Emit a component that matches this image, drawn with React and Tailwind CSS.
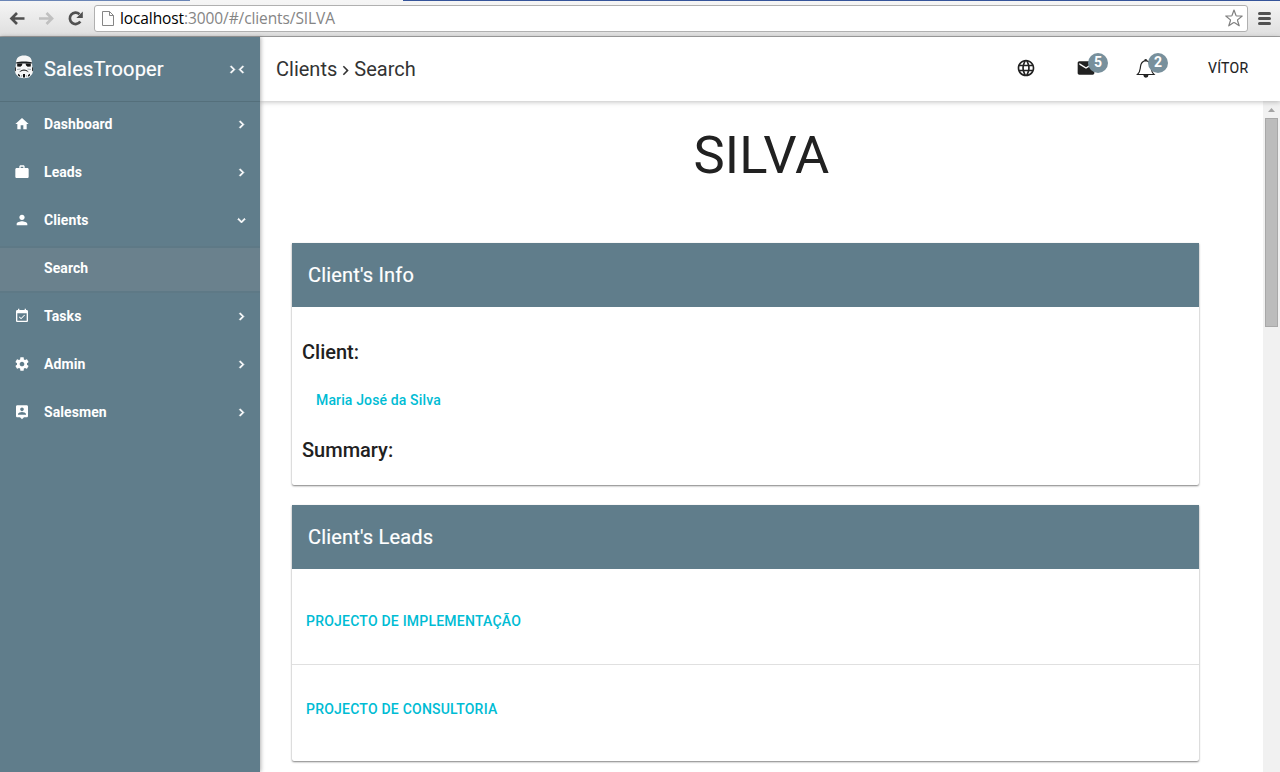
import React from 'react';

const paths = {
  home: 'M10 20v-6h4v6h5v-8h3L12 3 2 12h3v8z',
  work: 'M20 6h-4V4c0-1.1-.9-2-2-2h-4c-1.1 0-2 .9-2 2v2H4c-1.1 0-1.99.9-1.99 2L2 19c0 1.1.9 2 2 2h16c1.1 0 2-.9 2-2V8c0-1.1-.9-2-2-2zm-6 0h-4V4h4v2z',
  person: 'M12 12c2.21 0 4-1.79 4-4s-1.79-4-4-4-4 1.790-4 4 1.790 4 4 4zm0 2c-2.670 0-8 1.340-8 4v2h16v-2c0-2.660-5.330-4-8-4z',
  event: 'M16.530 11.060L15.470 10l-4.880 4.880-2.120-2.120-1.060 1.060L10.590 17l5.940-5.940zM19 3h-1V1h-2v2H8V1H6v2H5c-1.110 0-1.990.9-1.990 2L3 19c0 1.100.89 2 2 2h14c1.100 0 2-.9 2-2V5c0-1.100-.9-2-2-2zm0 16H5V8h14v11z',
  settings: 'M19.430 12.980c.04-.32.070-.64.070-.98s-.03-.66-.07-.98l2.110-1.650c.19-.15.240-.42.120-.64l-2-3.460c-.12-.22-.39-.3-.61-.22l-2.490 1c-.52-.4-1.080-.73-1.690-.98l-.38-2.650C14.460 2.180 14.250 2 14 2h-4c-.25 0-.46.180-.49.420l-.38 2.650c-.61.250-1.170.590-1.690.980l-2.490-1c-.23-.09-.49 0-.61.220l-2 3.460c-.13.220-.07.490.120.640l2.110 1.650c-.04.320-.07.650-.07.980s.03.660.070.980l-2.110 1.650c-.19.150-.24.420-.12.640l2 3.460c.12.220.390.300.610.220l2.490-1c.52.400 1.080.730 1.690.980l.38 2.650c.03.240.240.420.490.420h4c.25 0 .46-.18.490-.42l.38-2.650c.61-.25 1.170-.59 1.690-.98l2.490 1c.23.090.490 0 .610-.22l2-3.460c.12-.22.070-.49-.12-.64l-2.110-1.650zM12 15.500c-1.930 0-3.500-1.570-3.500-3.500s1.570-3.500 3.500-3.500 3.500 1.570 3.500 3.500-1.570 3.500-3.500 3.500z',
  contact: 'M19 2H5c-1.110 0-2 .9-2 2v14c0 1.100.89 2 2 2h4l3 3 3-3h4c1.100 0 2-.9 2-2V4c0-1.100-.9-2-2-2zm-7 3.300c1.490 0 2.700 1.210 2.700 2.700s-1.210 2.700-2.700 2.700S9.300 9.490 9.300 8s1.210-2.700 2.700-2.700zM18 16H6v-.9c0-2 4-3.100 6-3.100s6 1.100 6 3.100v.9z',
  right: 'M10 6L8.590 7.410 13.170 12l-4.580 4.590L10 18l6-6z',
  left: 'M15.410 7.410L14 6l-6 6 6 6 1.410-1.410L10.830 12z',
  down: 'M16.590 8.590L12 13.170 7.410 8.590 6 10l6 6 6-6z',
  globe: 'M11.990 2C6.470 2 2 6.480 2 12s4.470 10 9.990 10C17.520 22 22 17.520 22 12S17.520 2 11.990 2zm6.930 6h-2.950c-.32-1.250-.78-2.450-1.380-3.560 1.840.630 3.370 1.910 4.330 3.560zM12 4.040c.83 1.200 1.480 2.530 1.910 3.960h-3.820c.43-1.430 1.080-2.760 1.910-3.960zM4.260 14C4.100 13.360 4 12.690 4 12s.1-1.360.260-2h3.380c-.08.660-.14 1.320-.14 2 0 .68.060 1.340.140 2H4.260zm.82 2h2.950c.32 1.250.780 2.450 1.380 3.560-1.840-.63-3.370-1.900-4.330-3.560zm2.950-8H5.080c.96-1.660 2.490-2.930 4.330-3.560C8.810 5.550 8.350 6.750 8.030 8zM12 19.960c-.83-1.200-1.480-2.530-1.910-3.960h3.820c-.43 1.430-1.080 2.760-1.910 3.960zM14.340 14H9.660c-.09-.66-.16-1.320-.16-2 0-.68.070-1.350.160-2h4.680c.09.650.160 1.320.160 2 0 .68-.07 1.340-.16 2zm.25 5.560c.6-1.110 1.060-2.310 1.380-3.560h2.950c-.96 1.650-2.490 2.930-4.330 3.560zM16.360 14c.08-.66.140-1.320.140-2 0-.68-.06-1.340-.14-2h3.380c.16.640.260 1.310.260 2s-.1 1.360-.26 2h-3.380z',
  mail: 'M20 4H4c-1.100 0-1.990.9-1.990 2L2 18c0 1.100.9 2 2 2h16c1.100 0 2-.9 2-2V6c0-1.100-.9-2-2-2zm0 4l-8 5-8-5V6l8 5 8-5v2z',
};

function Icon({ name, className }) {
  return (
    <svg viewBox="0 0 24 24" fill="currentColor" className={className}>
      <path d={paths[name]} />
    </svg>
  );
}

function BrowserBar() {
  return (
    <header className="flex h-[37px] shrink-0 items-center border-b border-[#a2a2a2] bg-linear-to-b from-[#f6f6f6] to-[#dfdfdf]">
      <div className="flex h-full w-full flex-col">
        <div className="flex h-px">
          <div className="w-[190px] bg-[#6a85b6]" />
          <div className="w-[213px] bg-[#f5f5f5]" />
          <div className="flex-1 bg-[#35549a]" />
        </div>
        <div className="flex flex-1 items-center pb-px">
          <svg viewBox="0 0 94 30" className="h-[30px] w-[94px] shrink-0" fill="none" strokeWidth="2.700">
            <path d="M24.500 15.500H11.500M17 10l-5.500 5.500 5.500 5.500" stroke="#505050" />
            <path d="M39 15.500H52M46.500 10l5.500 5.500-5.500 5.500" stroke="#c0c0c0" />
            <path d="M80.300 18.500A5.700 5.700 0 1 1 79.500 11.200" stroke="#505050" />
            <path d="M82.800 8.500v6.500h-6.500z" fill="#505050" />
          </svg>
          <div className="flex h-[27px] flex-1 items-center rounded-[3px] border border-[#b0b0b0] bg-white pl-[7px] pr-[3px]">
            <svg viewBox="0 0 12 15" className="h-[15px] w-3" fill="#fdfdfd" stroke="#858585">
              <path d="M.5.5h7l4 4v10H.5zM7.500.5v4h4" />
            </svg>
            <span className="ml-[6px] flex-1 whitespace-pre font-['Open_Sans',sans-serif] text-[15.500px] leading-5 tracking-[-0.100px] text-[#858585]">
              <span className="text-black">localhost</span>:3000/#/clients/SILVA
            </span>
            <svg viewBox="0 0 20 20" className="size-5" fill="white" stroke="#808080" strokeWidth="1.200" strokeLinejoin="round">
              <path d="M10 2l1.900 5.300c.2.500.5.700 1 .7h5.300l-4.300 3.600c-.4.300-.5.700-.3 1.200l1.600 5-4.500-3c-.5-.3-.9-.3-1.400 0l-4.500 3 1.600-5c.2-.5.1-.9-.3-1.200L1.800 8h5.300c.5 0 .8-.2 1-.7z" />
            </svg>
          </div>
          <div className="flex w-[32px] flex-col items-center gap-[2px]">
            <div className="h-[3px] w-[13px] rounded-sm bg-[#505050]" />
            <div className="h-[3px] w-[13px] rounded-sm bg-[#505050]" />
            <div className="h-[3px] w-[13px] rounded-sm bg-[#505050]" />
          </div>
        </div>
      </div>
    </header>
  );
}

function Helmet() {
  return (
    <svg viewBox="0 0 20 24" className="h-6 w-5">
      <path d="M2 8C2 3 5 .6 10 .6S18 3 18 8l.5 5 .7 3-1 3-3.200 3.500-5 .7-5-.7L1.800 19l-1-3 .7-3z" fill="#f6f6f6" />
      <path d="M2.200 7.200c4-1 11.600-1 15.600 0v1.300H2.200z" fill="#1d2022" />
      <path d="M3.200 8.500h5.300l-.6 2-1.500 1.200-3.200-.2zM16.800 8.500h-5.300l.6 2 1.500 1.200 3.200-.2z" fill="#151515" />
      <path d="M1 12l1 .8v3.700l-1-.8zM19 12l-1 .8v3.700l1-.8z" fill="#333" />
      <path d="M5.200 17.500c1.500-4 8.100-4 9.600 0-2.500-2.200-7.100-2.200-9.600 0z" fill="#222" />
      <path d="M9 19h2v3.500H9zM4 18.800l2 1.200v1.700l-2-1.200zM16 18.800L14 20v1.700l2-1.200z" fill="#111" />
      <path d="M3 14.500l3.500-.5M17 14.500l-3.500-.5M7 22l1-2M13 22l-1-2" stroke="#8d989e" strokeWidth=".8" />
    </svg>
  );
}

const items = [
  ['home', 'Dashboard'],
  ['work', 'Leads'],
  ['person', 'Clients'],
  ['event', 'Tasks'],
  ['settings', 'Admin'],
  ['contact', 'Salesmen'],
];

function Sidebar() {
  return (
    <aside className="z-20 flex w-[260px] shrink-0 flex-col bg-[#607d8b] text-white shadow-[1px_0_4px_rgba(0,0,0,0.3)]">
      <div className="flex h-[65px] items-center border-b border-[#546f7b] pl-[14px] pr-[11px]">
        <div className="-mt-1"><Helmet /></div>
        <span className="ml-[10px] flex-1 text-xl tracking-[0.170px] [-webkit-text-stroke:0.200px]">SalesTrooper</span>
        <Icon name="right" className="size-[15px] stroke-white" />
        <Icon name="left" className="-ml-[6px] size-[15px] stroke-white" />
      </div>
      <nav className="text-sm font-bold tracking-[0.080px]">
        {items.map(([icon, label]) => (
          <React.Fragment key={label}>
            <a className="flex h-12 items-center pb-1 pl-[14px] pr-[11px]">
              <Icon name={icon} className="size-4" />
              <span className="ml-[14px] flex-1">{label}</span>
              <Icon name={label === 'Clients' ? 'down' : 'right'} className="size-[15px] stroke-white" />
            </a>
            {label === 'Clients' && (
              <div className="h-12 pb-px">
                <a className="flex h-[47px] items-center border-y-2 border-[#5e7986] bg-[#6a818d] pb-[3px] pl-11">Search</a>
              </div>
            )}
          </React.Fragment>
        ))}
      </nav>
    </aside>
  );
}

function Badge({ children }) {
  return (
    <span className="absolute left-3 -top-[5px] flex size-5 items-center justify-center rounded-full bg-[#78909c] pb-[2px] text-sm font-bold text-white">
      {children}
    </span>
  );
}

function TopBar() {
  return (
    <div className="z-10 flex h-16 shrink-0 items-center bg-white pl-4 pr-[31px] text-[#212121] shadow-[0_1px_5px_rgba(0,0,0,0.25)]">
      <div className="flex flex-1 items-center text-xl text-[#333]">
        Clients
        <Icon name="right" className="-mx-px mt-[3px] size-[19px]" />
        Search
      </div>
      <div className="flex items-center pb-[2px]">
        <Icon name="globe" className="size-5" />
        <div className="relative ml-10 size-5">
          <Icon name="mail" className="size-5" />
          <Badge>5</Badge>
        </div>
        <div className="relative ml-10 size-5">
          <svg viewBox="0 0 20 20" className="size-5" fill="none" stroke="#212121" strokeWidth="1.200">
            <path d="M1.500 16.500c3-3 2.500-5 3-8 .4-3.500 2-5.200 5.200-5.800C13 3.300 14.600 5 15 8.500c.5 3 0 5 3 8z" />
            <path d="M8.700 2.700c0-1.600 2-1.600 2 0" />
            <path d="M8 17.200c0 2.500 3.800 2.500 3.800 0z" fill="#212121" />
          </svg>
          <Badge>2</Badge>
        </div>
        <span className="ml-[52px] w-[41px] whitespace-nowrap text-sm tracking-[0.300px] [-webkit-text-stroke:0.100px]">VÍTOR</span>
      </div>
    </div>
  );
}

function Card({ title, children }) {
  return (
    <section className="overflow-hidden rounded-b-[2px] bg-white shadow-[0_1px_2px_rgba(0,0,0,0.5)]">
      <h2 className="flex h-16 items-center bg-[#607d8b] px-4 text-xl tracking-[0.170px] text-white [-webkit-text-stroke:0.200px]">{title}</h2>
      {children}
    </section>
  );
}

function Scrollbar() {
  return (
    <div className="flex w-[17px] shrink-0 flex-col items-center bg-[#f1f1f1]">
      <svg viewBox="0 0 17 17" className="size-[17px]">
        <path d="M5 11l3.500-4 3.500 4z" fill="#a3a3a3" />
      </svg>
      <div className="h-[209px] w-[13px] border border-[#a8a8a8] bg-[#bcbcbc]" />
    </div>
  );
}

export default function App() {
  return (
    <div className="flex h-[772px] w-[1280px] flex-col overflow-hidden bg-white font-[Roboto,sans-serif]">
      <BrowserBar />
      <div className="flex min-h-0 flex-1">
        <Sidebar />
        <main className="flex min-w-0 flex-1 flex-col">
          <TopBar />
          <div className="flex min-h-0 flex-1">
            <div className="flex-1 pl-8 pr-16 text-[#212121]">
              <h1 className="flex h-[142px] justify-center pl-8 pt-6 text-[52.500px] leading-[60px] tracking-[0.200px]">SILVA</h1>
              <div className="flex flex-col gap-[20px]">
                <Card title="Client's Info">
                  <div className="flex h-[178px] flex-col px-[10px] pt-[30px] text-xl font-medium">
                    <h3 className="leading-[30px]">Client:</h3>
                    <a className="mt-[18px] pl-[14px] text-sm leading-[30px] font-medium tracking-[0.140px] text-[#00bcd4]">Maria José da Silva</a>
                    <h3 className="mt-5 leading-[30px]">Summary:</h3>
                  </div>
                </Card>
                <Card title="Client's Leads">
                  <div className="text-sm font-medium tracking-[0.220px] text-[#00bcd4]">
                    <a className="flex h-24 items-center border-b border-[#e0e0e0] pt-[9px] pl-[14px]">PROJECTO DE IMPLEMENTAÇÃO</a>
                    <a className="flex h-24 items-center pb-2 pl-[14px]">PROJECTO DE CONSULTORIA</a>
                  </div>
                </Card>
              </div>
            </div>
            <Scrollbar />
          </div>
        </main>
      </div>
    </div>
  );
}
